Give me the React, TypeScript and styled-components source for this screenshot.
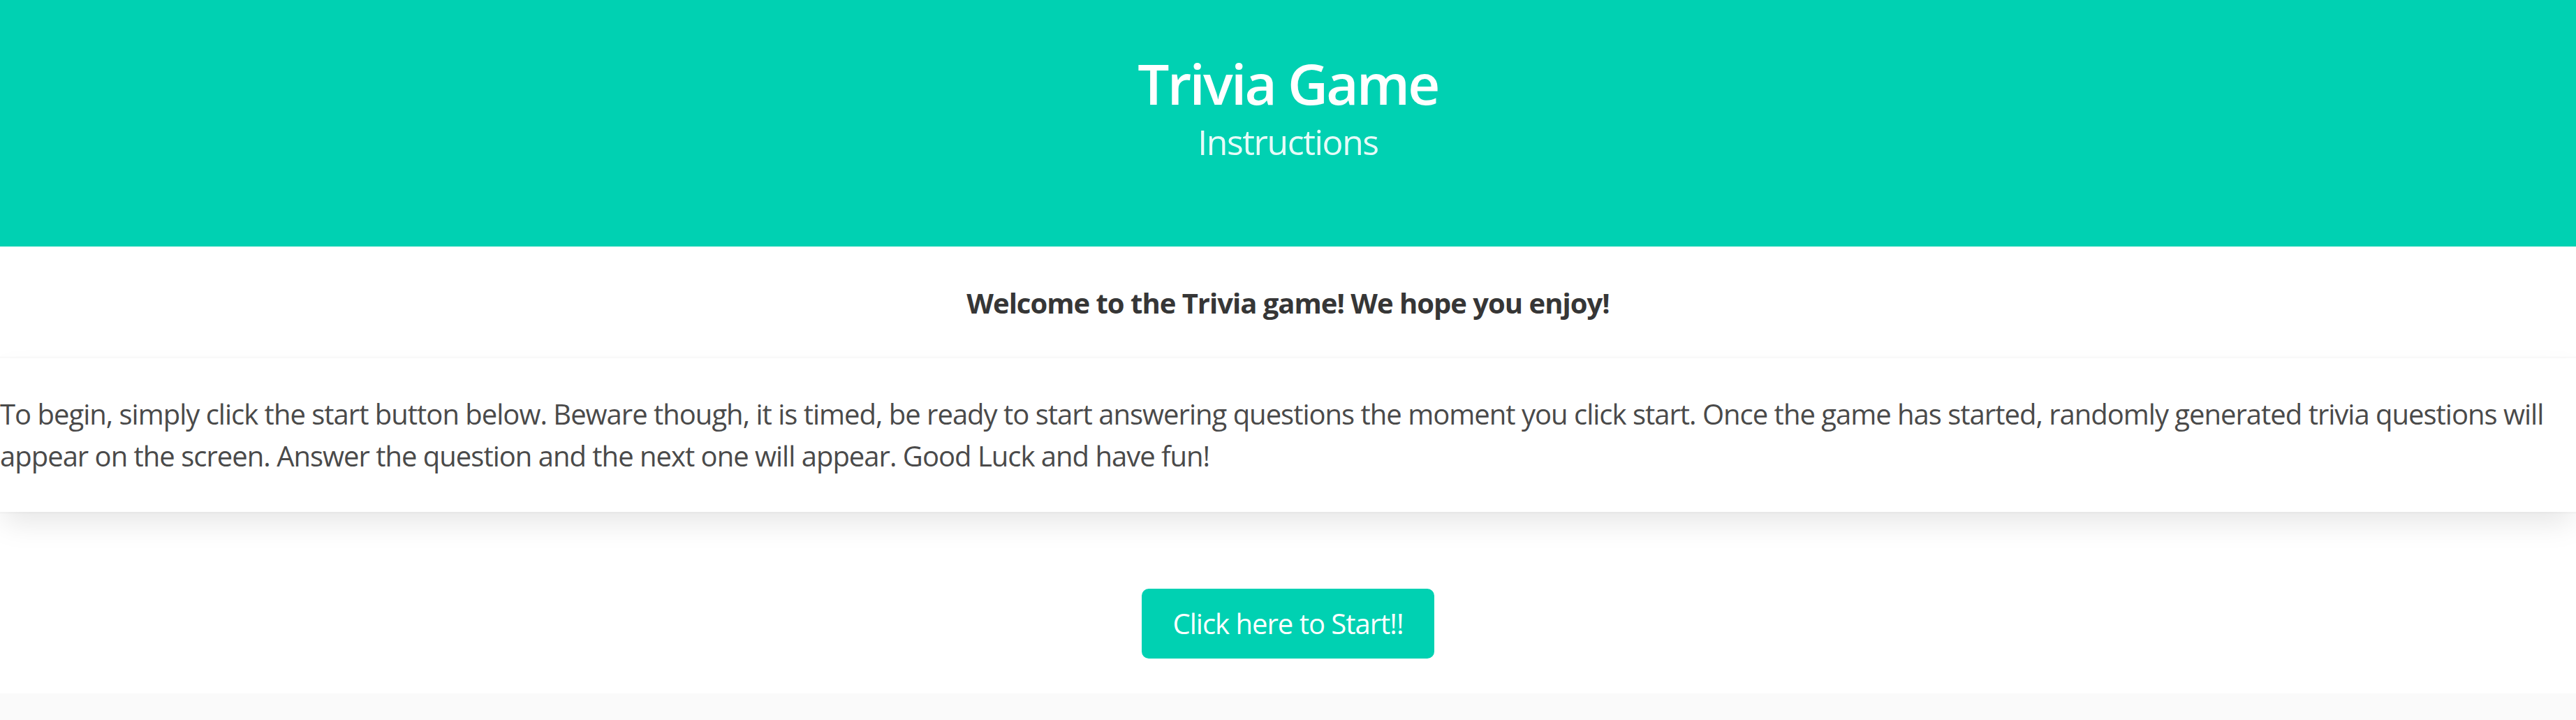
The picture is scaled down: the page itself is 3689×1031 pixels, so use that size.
import styled, { createGlobalStyle } from 'styled-components';

const GlobalStyle = createGlobalStyle`
  html, body {
    margin: 0;
    padding: 0;
    background: #ffffff;
  }
  body {
    font-family: 'Open Sans', 'Noto Sans', sans-serif;
    color: #4a4a4a;
  }
  * {
    box-sizing: border-box;
  }
`;

const App = () => {
  return (
    <>
      <GlobalStyle />
      <Hero>
        <Title>Trivia Game</Title>
        <Subtitle>Instructions</Subtitle>
      </Hero>
      <main>
        <WelcomeBar>Welcome to the Trivia game! We hope you enjoy!</WelcomeBar>
        <InstructionsBox>
          <Paragraph>
            To begin, simply click the start button below. Beware though, it is
            timed, be ready to start answering questions the moment you click
            start. Once the game has started, randomly generated trivia
            questions will appear on the screen. Answer the question and the
            next one will appear. Good Luck and have fun!
          </Paragraph>
        </InstructionsBox>
        <StartArea>
          <StartButton type="button">Click here to Start!!</StartButton>
        </StartArea>
      </main>
      <Footer />
    </>
  );
};

export default App;

const Hero = styled.header`
  background-color: #00d1b2;
  padding: 74px 0 119px;
  text-align: center;
`;

const Title = styled.h1`
  margin: 0 0 8px;
  font-size: 80px;
  font-weight: 600;
  line-height: 90px;
  letter-spacing: -0.035em;
  color: #ffffff;
`;

const Subtitle = styled.h2`
  margin: 0;
  font-size: 50px;
  font-weight: 400;
  line-height: 62px;
  letter-spacing: -0.03em;
  color: rgba(255, 255, 255, 0.9);
`;

const WelcomeBar = styled.p`
  margin: 0;
  padding: 51px 0 49px;
  text-align: center;
  font-size: 40px;
  font-weight: 700;
  line-height: 60px;
  letter-spacing: -0.025em;
  color: #363636;
`;

const InstructionsBox = styled.section`
  position: relative;
  background: #ffffff;
  padding: 50px 0;
  box-shadow: 0 20px 40px -5px rgba(10, 10, 10, 0.1),
    0 0 0 2.5px rgba(10, 10, 10, 0.02);
`;

const Paragraph = styled.p`
  margin: 0;
  font-size: 40px;
  line-height: 60px;
  letter-spacing: -0.025em;
  color: #4a4a4a;
`;

const StartArea = styled.div`
  display: flex;
  justify-content: center;
  padding: 110px 0 50px;
`;

const StartButton = styled.button`
  display: inline-flex;
  align-items: center;
  justify-content: center;
  height: 100px;
  padding: 0 44px;
  border: none;
  border-radius: 10px;
  background-color: #00d1b2;
  color: #ffffff;
  font-family: 'Open Sans', 'Noto Sans', sans-serif;
  font-size: 40px;
  line-height: 60px;
  letter-spacing: -0.025em;
  cursor: pointer;
`;

const Footer = styled.footer`
  background-color: #fafafa;
  height: 38px;
`;
